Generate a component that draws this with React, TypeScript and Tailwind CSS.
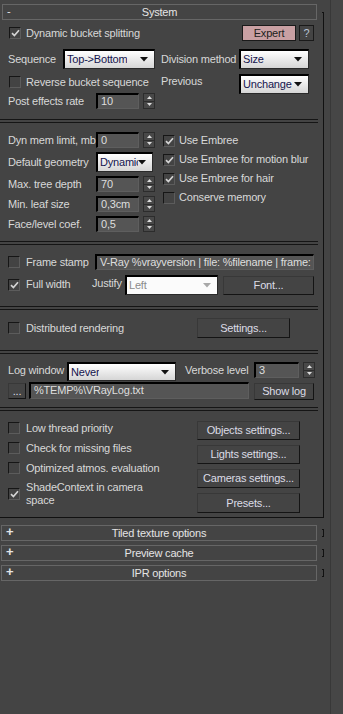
import React from 'react';

const Check = ({ on = false }: { on?: boolean }) => (
    <span className="flex h-3 w-3 shrink-0 items-center justify-center border border-t-[#161616] border-l-[#161616] border-b-[#5c5c5c] border-r-[#5c5c5c] bg-[#434343]">
        {on && (
            <svg width="9" height="8" viewBox="0 0 9 8">
                <path d="M1 4.2l2.4 2.4L8 1.2" stroke="#d4d4d4" strokeWidth="1.7" fill="none" />
            </svg>
        )}
    </span>
);

const Field = ({ value, className = '' }: { value: string; className?: string }) => (
    <div className={`flex shrink-0 items-center overflow-hidden whitespace-nowrap border-t-2 border-l-2 border-b border-r border-t-black border-l-black border-b-[#5e5e5e] border-r-[#5e5e5e] bg-[#555] pl-[3px] text-[#dedede] ${className}`}>
        {value}
    </div>
);

const Spin = () => (
    <div className="flex h-4 w-3 shrink-0 flex-col border border-[#2c2c2c] bg-[#484848]">
        <div className="flex flex-1 items-center justify-center border-b border-[#2c2c2c]">
            <svg width="5" height="3" viewBox="0 0 5 3"><path d="M2.5 0L5 3H0z" fill="#dcdcdc" /></svg>
        </div>
        <div className="flex flex-1 items-center justify-center">
            <svg width="5" height="3" viewBox="0 0 5 3"><path d="M0 0h5L2.5 3z" fill="#dcdcdc" /></svg>
        </div>
    </div>
);

const Select = ({ value, className = '', disabled = false }: { value: string; className?: string; disabled?: boolean }) => (
    <div className={`flex shrink-0 items-center justify-between border-t-2 border-l-2 border-b border-r border-t-black border-l-black border-b-[#2a2a2a] border-r-[#2a2a2a] pl-[2px] pr-[6px] ${disabled ? 'bg-[#fbfbfb] text-[#8c8c8c]' : 'bg-linear-to-b from-[#ffffff] to-[#d6d6d6] text-[#14144e]'} ${className}`}>
        <span className="overflow-hidden whitespace-nowrap">{value}</span>
        <svg width="8" height="5" viewBox="0 0 8 5" className="shrink-0">
            <path d="M0 0h8L4 4.5z" fill={disabled ? '#a8a8a8' : '#111'} />
        </svg>
    </div>
);

const Btn = ({ children, className = '' }: { children: React.ReactNode; className?: string }) => (
    <div className={`flex shrink-0 items-center justify-center whitespace-nowrap border border-t-[#383838] border-l-[#383838] border-b-[#141414] border-r-[#141414] bg-[#444] text-[#dcdce6] ${className}`}>
        {children}
    </div>
);

const Sep = () => <div className="h-[4px] w-[318px] border-y border-[#151515]" />;

const Rollout = ({ title }: { title: string }) => (
    <div className="flex h-[16px] items-center">
        <div className="relative ml-[1px] flex h-full w-[316px] items-center justify-center border border-[#666] text-[#e4e4e4]">
            <span className="absolute left-[4px] top-[-1px] text-[13px] font-bold">+</span>
            {title}
        </div>
        <div className="ml-[5px] h-[8px] w-[2px] border-t border-r border-b border-[#111]" />
    </div>
);

export default function App() {
    return (
        <div className="flex h-[714px] w-[343px] bg-[#444] font-['Liberation_Sans',Arial,sans-serif] text-[11px] leading-[13px] tracking-[-0.2px] text-[#d8d8d8]">
            <div className="w-[330px]">
                {/* System rollout */}
                <div className="flex w-[324px] border-b border-[#111]">
                    <div className="w-[322px]">
                        <div className="relative mt-[4px] ml-[2px] flex h-[16px] w-[315px] items-center justify-center border border-[#666] text-[#e6e6e6]">
                            <span className="absolute left-[4px] top-[0px]">-</span>
                            System
                        </div>

                        {/* bucket options */}
                        <div className="mt-[5px] flex h-[16px] items-center pr-[8px] pl-[9px]">
                            <Check on />
                            <span className="ml-[5px]">Dynamic bucket splitting</span>
                            <div className="ml-auto flex gap-[3px]">
                                <div className="flex h-[16px] w-[54px] items-center justify-center border border-[#1a1a1a] bg-[#c9a0a3] text-[#202020]">Expert</div>
                                <div className="flex h-[16px] w-[15px] items-center justify-center border border-[#1a1a1a] text-[#b8c4d8]">?</div>
                            </div>
                        </div>
                        <div className="mt-[8px] flex h-[20px] items-center pl-[8px]">
                            <span className="w-[55px]">Sequence</span>
                            <Select value="Top->Bottom" className="h-[20px] w-[92px]" />
                            <span className="ml-[6px] w-[78px] whitespace-nowrap">Division method</span>
                            <Select value="Size" className="h-[20px] w-[70px]" />
                        </div>
                        <div className="mt-[5px] flex h-[20px] items-start pl-[9px]">
                            <div className="mt-[2px] flex h-[12px] w-[152px] items-center">
                                <Check />
                                <span className="ml-[5px] whitespace-nowrap">Reverse bucket sequence</span>
                            </div>
                            <span className="mt-[1px] w-[78px]">Previous</span>
                            <Select value="Unchange" className="h-[20px] w-[70px]" />
                        </div>
                        <div className="mt-[-1px] flex h-[16px] items-center pl-[8px]">
                            <span className="w-[88px] whitespace-nowrap">Post effects rate</span>
                            <Field value="10" className="h-[16px] w-[43px]" />
                            <div className="ml-[4px]"><Spin /></div>
                        </div>

                        <div className="mt-[10px]"><Sep /></div>

                        {/* geometry / embree */}
                        <div className="flex">
                            <div className="flex w-[163px] flex-col gap-[4px] pt-[9px] pl-[8px]">
                                {[
                                    ['Dyn mem limit, mb', '0'],
                                    ['Default geometry', ''],
                                    ['Max. tree depth', '70'],
                                    ['Min. leaf size', '0,3cm'],
                                    ['Face/level coef.', '0,5'],
                                ].map(([label, val]) =>
                                    label === 'Default geometry' ? (
                                        <div key={label} className="flex h-[20px] items-center">
                                            <span className="w-[88px] overflow-hidden whitespace-nowrap">{label}</span>
                                            <Select value="Dynamic" className="h-[20px] w-[57px]" />
                                        </div>
                                    ) : (
                                        <div key={label} className="flex h-[16px] items-center">
                                            <span className="w-[88px] overflow-hidden whitespace-nowrap">{label}</span>
                                            <Field value={val} className="h-[16px] w-[43px]" />
                                            <div className="ml-[4px]"><Spin /></div>
                                        </div>
                                    )
                                )}
                            </div>
                            <div className="flex flex-col pt-[8px]">
                                {[
                                    ['Use Embree', true],
                                    ['Use Embree for motion blur', true],
                                    ['Use Embree for hair', true],
                                    ['Conserve memory', false],
                                ].map(([label, on]) => (
                                    <div key={label as string} className="flex h-[19px] items-center">
                                        <Check on={on as boolean} />
                                        <span className="ml-[4px] whitespace-nowrap">{label as string}</span>
                                    </div>
                                ))}
                            </div>
                        </div>

                        <div className="mt-[9px]"><Sep /></div>

                        {/* frame stamp */}
                        <div className="mt-[9px] flex h-[16px] items-center pl-[8px]">
                            <Check />
                            <span className="ml-[6px] w-[69px] whitespace-nowrap">Frame stamp</span>
                            <Field value="V-Ray %vrayversion | file: %filename | frame: %frame" className="h-[16px] w-[219px]" />
                        </div>
                        <div className="mt-[5px] flex h-[20px] items-center pl-[8px]">
                            <div className="mb-[1px] flex items-center">
                                <Check on />
                                <span className="ml-[6px] w-[66px]">Full width</span>
                            </div>
                            <span className="mb-[4px] w-[33px]">Justify</span>
                            <Select value="Left" disabled className="h-[20px] w-[93px]" />
                            <Btn className="ml-[5px] h-[19px] w-[91px]">Font...</Btn>
                        </div>

                        <div className="mt-[11px]"><Sep /></div>

                        {/* distributed */}
                        <div className="mt-[8px] flex h-[20px] items-center pl-[8px]">
                            <Check />
                            <span className="ml-[6px] w-[171px]">Distributed rendering</span>
                            <Btn className="h-[20px] w-[93px]">Settings...</Btn>
                        </div>

                        <div className="mt-[12px]"><Sep /></div>

                        {/* log */}
                        <div className="mt-[8px] flex h-[19px] items-start pl-[8px]">
                            <span className="mt-[2px] w-[59px] whitespace-nowrap">Log window</span>
                            <Select value="Never" className="h-[19px] w-[109px]" />
                            <span className="mt-[2px] ml-[9px] w-[69px] whitespace-nowrap">Verbose level</span>
                            <Field value="3" className="h-[16px] w-[45px]" />
                            <div className="ml-[4px]"><Spin /></div>
                        </div>
                        <div className="flex h-[18px] items-center pl-[8px]">
                            <Btn className="mt-[2px] h-[16px] w-[18px]">...</Btn>
                            <Field value="%TEMP%\VRayLog.txt" className="ml-[3px] h-[17px] w-[220px]" />
                            <Btn className="mt-[2px] ml-[5px] h-[17px] w-[60px]">Show log</Btn>
                        </div>

                        <div className="mt-[8px]"><Sep /></div>

                        {/* misc */}
                        <div className="flex pb-[4px]">
                            <div className="w-[197px] pt-[10px] pl-[8px]">
                                <div className="flex h-[14px] items-center">
                                    <Check />
                                    <span className="ml-[6px] whitespace-nowrap">Low thread priority</span>
                                </div>
                                <div className="mt-[6px] flex h-[14px] items-center">
                                    <Check />
                                    <span className="ml-[6px] whitespace-nowrap">Check for missing files</span>
                                </div>
                                <div className="mt-[6px] flex h-[14px] items-center">
                                    <Check />
                                    <span className="ml-[6px] whitespace-nowrap">Optimized atmos. evaluation</span>
                                </div>
                                <div className="mt-[6px] flex items-center">
                                    <Check on />
                                    <span className="ml-[6px] w-[130px]">ShadeContext in camera space</span>
                                </div>
                            </div>
                            <div className="flex flex-col gap-[5px] pt-[10px]">
                                <Btn className="h-[19px] w-[103px]">Objects settings...</Btn>
                                <Btn className="h-[19px] w-[103px]">Lights settings...</Btn>
                                <Btn className="h-[19px] w-[103px]">Cameras settings...</Btn>
                                <Btn className="h-[20px] w-[103px]">Presets...</Btn>
                            </div>
                        </div>
                    </div>
                    <div className="mt-[12px] w-[2px] border-t border-r border-[#111]" />
                </div>

                <div className="mt-[7px] flex flex-col gap-[4px]">
                    <Rollout title="Tiled texture options" />
                    <Rollout title="Preview cache" />
                    <Rollout title="IPR options" />
                </div>
            </div>
            <div className="flex-1 border-l border-[#383838] bg-[#464646]" />
        </div>
    );
}
